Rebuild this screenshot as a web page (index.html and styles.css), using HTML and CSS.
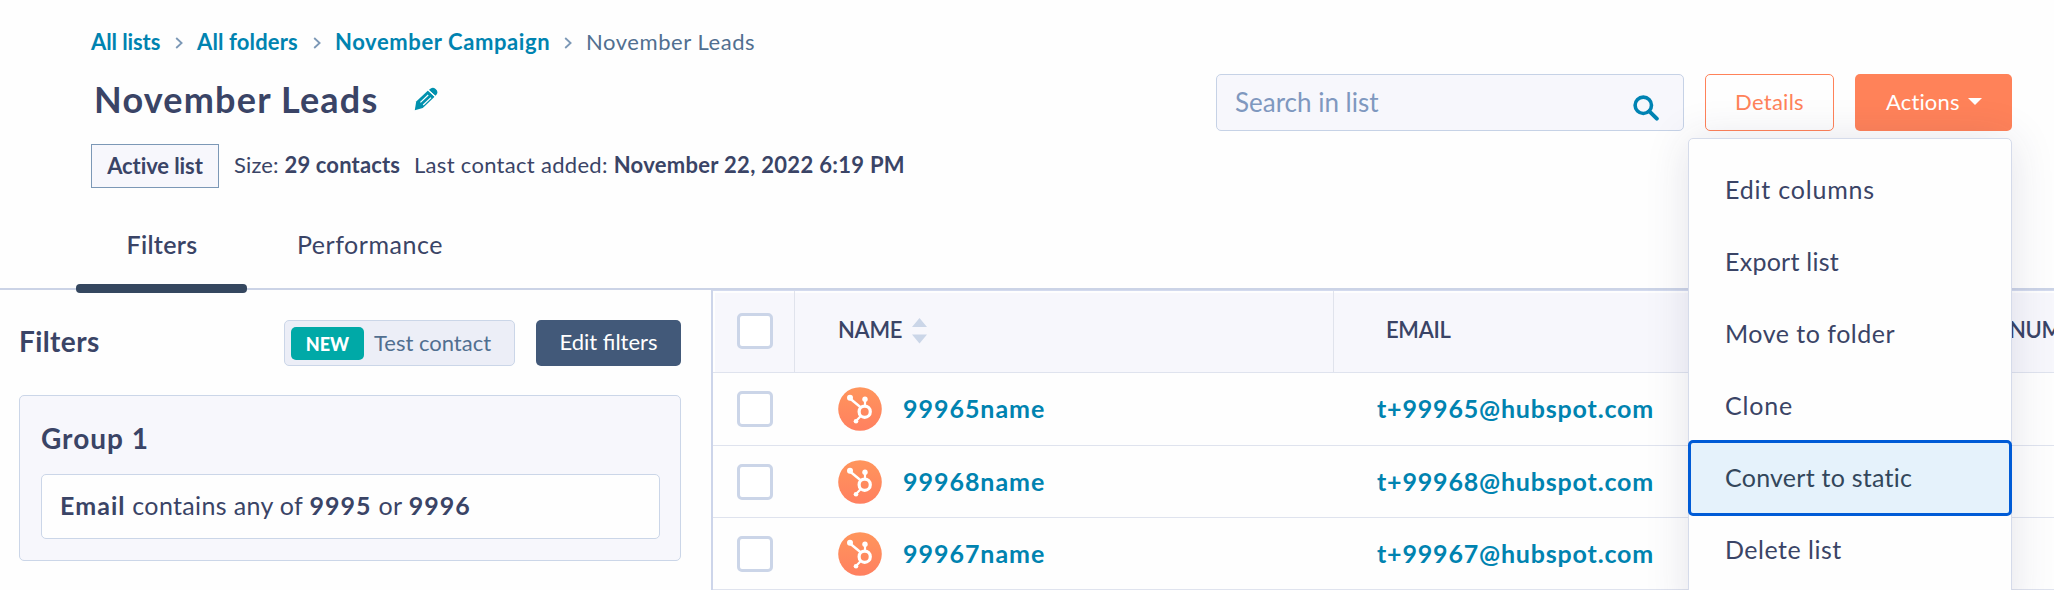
FILE: index.html
```html
<!DOCTYPE html>
<html lang="en">
<head>
<meta charset="utf-8">
<title>November Leads</title>
<link rel="stylesheet" href="styles.css">
</head>
<body>
<svg class="defs" width="0" height="0" aria-hidden="true">
  <defs>
    <linearGradient id="avatar-fill" x1="0" y1="0" x2="0" y2="1">
      <stop offset="0" stop-color="#ff955c"/><stop offset="1" stop-color="#ff8060"/>
    </linearGradient>
    <symbol id="chevron" viewBox="0 0 8 12"><path d="M1.2 1 6.6 6 1.2 11" fill="none" stroke="#7c98b6" stroke-width="1.8"/></symbol>
    <symbol id="sprocket" viewBox="0 0 44 44">
      <circle cx="22" cy="22" r="21.8" fill="url(#avatar-fill)"/>
      <g fill="none" stroke="#fff">
        <circle cx="26.7" cy="24.7" r="5.6" stroke-width="3.2"/>
        <path d="M12 11.5 22.6 20.2" stroke-width="2.4"/>
        <path d="M27 12V19.4" stroke-width="2.2"/>
        <path d="M22.8 29 18 34" stroke-width="2.2"/>
      </g>
      <g fill="#fff"><circle cx="12" cy="10.8" r="3"/><circle cx="27" cy="12.2" r="2.7"/><circle cx="18" cy="34.2" r="2.3"/></g>
    </symbol>
  </defs>
</svg>

<header class="header">
  <div class="heading">
    <nav class="crumbs">
      <a class="crumb crumb-lists">All lists</a><svg class="chevron"><use href="#chevron"/></svg>
      <a class="crumb crumb-folders">All folders</a><svg class="chevron"><use href="#chevron"/></svg>
      <a class="crumb crumb-campaign">November Campaign</a><svg class="chevron"><use href="#chevron"/></svg>
      <span class="crumb-current">November Leads</span>
    </nav>
    <div class="title-row">
      <h1 class="title">November Leads</h1>
      <svg class="pencil" viewBox="0 0 24 24">
        <path d="M.8 23.2 2.2 14.6 14 3.6 20.6 9.8 8.8 21Z" fill="#0091ae"/>
        <path d="M15.4 2.6Q18.4-.6 21.6 2 24.8 4.8 22.4 7.8L21.4 8.8 14.8 3Z" fill="#0091ae"/>
        <path d="M6.4 15.4 14.2 8M9.2 18 17 10.6M14 2.9 21 9.4" fill="none" stroke="#fefefe" stroke-width="1.2"/>
      </svg>
    </div>
    <div class="meta">
      <span class="badge">Active list</span>
      <span class="meta-size">Size: <b>29 contacts</b></span>
      <span class="meta-added">Last contact added: <b>November 22, 2022 6:19 PM</b></span>
    </div>
  </div>
  <div class="tools">
    <div class="search">
      <span class="search-text">Search in list</span>
      <svg class="search-icon" viewBox="0 0 26 26"><circle cx="10.3" cy="10.3" r="8.2" fill="none" stroke="#0083b3" stroke-width="3.6"/><path d="M16.4 16.4 23.8 23.6" stroke="#0083b3" stroke-width="4" stroke-linecap="round"/></svg>
    </div>
    <button class="btn btn-outline">Details</button>
    <div class="dropdown">
      <button class="btn btn-primary">Actions<i class="caret"></i></button>
      <ul class="menu">
        <li class="menu-item wide">Edit columns</li>
        <li class="menu-item tight">Export list</li>
        <li class="menu-item">Move to folder</li>
        <li class="menu-item wide">Clone</li>
        <li class="menu-item focused">Convert to static</li>
        <li class="menu-item">Delete list</li>
      </ul>
    </div>
  </div>
</header>

<div class="tabs">
  <div class="tab active">Filters</div>
  <div class="tab">Performance</div>
</div>

<main class="content">
  <aside class="sidebar">
    <div class="sidebar-head">
      <h2 class="sidebar-title">Filters</h2>
      <div class="test"><span class="new">NEW</span>Test contact</div>
      <button class="edit">Edit filters</button>
    </div>
    <section class="group">
      <h3 class="group-title">Group 1</h3>
      <p class="rule"><b>Email</b> contains any of <b>9995</b> or <b>9996</b></p>
    </section>
  </aside>
  <section class="table">
    <div class="row head">
      <div class="cell cell-check"><i class="check"></i></div>
      <div class="cell cell-name"><span class="th-name">NAME</span><svg class="sort" viewBox="0 0 15 26"><path d="M7.5 0 15 9H0ZM0 16.5H15L7.5 25.5Z" fill="#cbd6e8"/></svg></div>
      <div class="cell cell-email"><span class="th">EMAIL</span></div>
      <div class="cell cell-phone"><span class="th">NUM</span></div>
    </div>
    <div class="row">
      <div class="cell cell-check"><i class="check"></i></div>
      <div class="cell cell-name"><svg class="avatar"><use href="#sprocket"/></svg><a class="link">99965name</a></div>
      <div class="cell cell-email"><a class="link mail">t+99965@hubspot.com</a></div>
    </div>
    <div class="row">
      <div class="cell cell-check"><i class="check"></i></div>
      <div class="cell cell-name"><svg class="avatar"><use href="#sprocket"/></svg><a class="link">99968name</a></div>
      <div class="cell cell-email"><a class="link mail">t+99968@hubspot.com</a></div>
    </div>
    <div class="row">
      <div class="cell cell-check"><i class="check"></i></div>
      <div class="cell cell-name"><svg class="avatar"><use href="#sprocket"/></svg><a class="link">99967name</a></div>
      <div class="cell cell-email"><a class="link mail">t+99967@hubspot.com</a></div>
    </div>
  </section>
</main>
</body>
</html>
```
FILE: styles.css
```css
* { box-sizing: border-box; }
body {
  margin: 0;
  width: 2054px;
  height: 590px;
  overflow: hidden;
  background: #fefefe;
  color: #3a4466;
  font-family: Lato, "Open Sans", sans-serif;
  font-size: 25px;
}
h1, h2, h3, p, ul { margin: 0; padding: 0; }
button { font: inherit; margin: 0; }
.defs { display: block; height: 0; }

/* Header */
.header {
  display: flex;
  justify-content: space-between;
  height: 204px;
  padding: 26px 42px 0 91px;
}
.crumbs {
  display: flex;
  align-items: center;
  height: 31px;
  font-size: 22px;
  line-height: 31px;
  white-space: nowrap;
}
.crumb { color: #0083b0; font-weight: 700; }
.crumb-lists { width: 70px; letter-spacing: -.1px; }
.crumb-folders { width: 102px; letter-spacing: .14px; }
.crumb-campaign { width: 215px; letter-spacing: .6px; }
.crumb-current { color: #516f90; letter-spacing: .55px; }
.chevron { width: 8px; height: 12px; margin: 2px 14px 0 14px; }
.title-row { display: flex; align-items: center; height: 44px; margin-top: 20px; }
.title { width: 320px; padding-left: 3px; font-size: 36px; line-height: 44px; font-weight: 700; letter-spacing: 1.2px; }
.pencil { width: 24px; height: 24px; margin-left: 3px; }
.meta { display: flex; align-items: center; height: 44px; margin-top: 23px; font-size: 22px; white-space: nowrap; }
.badge {
  width: 128px;
  height: 44px;
  border: 1px solid #7c98b6;
  background: #f7f7fc;
  font-weight: 700;
  line-height: 41px;
  text-align: center;
  letter-spacing: -.1px;
}
.meta-size { width: 180px; margin-left: 15px; padding-bottom: 4px; letter-spacing: .15px; }
.meta-added { padding-bottom: 4px; letter-spacing: .3px; }

.tools { display: flex; height: 57px; margin-top: 48px; }
.search {
  display: flex;
  justify-content: space-between;
  width: 468px;
  padding: 0 24px 0 18px;
  border: 1px solid #c6d2e6;
  border-radius: 5px;
  background: #f7f7fc;
}
.search-text { color: #7f98bf; font-size: 26px; line-height: 54px; }
.search-icon { width: 26px; height: 26px; margin-top: 20px; }
.btn { height: 57px; border-radius: 5px; font-size: 22px; padding: 0 0 2px; }
.btn-outline { width: 129px; margin: 0 21px; border: 1px solid #ff8259; background: #fefefe; color: #ff8259; letter-spacing: .27px; }
.btn-primary { display: flex; align-items: center; width: 157px; padding: 0 0 2px 31px; border: 0; background: #ff8259; color: #fff; letter-spacing: .15px; }
.caret { margin-left: 8px; border: 7px solid transparent; border-top-color: #fff; border-bottom: 0; }
.dropdown { position: relative; }
.menu {
  position: absolute;
  z-index: 2;
  top: 64px;
  right: 0;
  width: 324px;
  height: 480px;
  padding-top: 15px;
  list-style: none;
  border: 1px solid #d5dbea;
  border-radius: 5px;
  background: #fefefe;
  box-shadow: 0 2px 44px rgba(45, 45, 90, .13);
}
.menu-item { height: 72px; padding-left: 36px; line-height: 71px; letter-spacing: .5px; }
.menu-item.tight { letter-spacing: .25px; }
.menu-item.wide { letter-spacing: .8px; }
.menu-item.focused {
  margin: 0 1px;
  padding-left: 35px;
  letter-spacing: .25px;
  border-radius: 3px;
  background: #e5f2fb;
  color: #33475b;
  outline: 3px solid #005bd6;
  outline-offset: -1px;
}

/* Tabs */
.tabs {
  display: flex;
  height: 86px;
  padding-left: 76px;
  border-bottom: 2px solid #cbd3e6;
}
.tab { height: 89px; padding: 0 50px; line-height: 80px; letter-spacing: .52px; }
.tab.active { width: 171px; padding: 0 0 0 1px; text-align: center; font-weight: 600; letter-spacing: .3px; position: relative; }
.tab.active::after {
  content: "";
  position: absolute;
  left: 0;
  bottom: 0;
  width: 171px;
  height: 9px;
  border-radius: 4px;
  background: #35475f;
}

/* Filter panel */
.content { display: flex; height: 300px; }
.sidebar { width: 711px; padding: 30px 30px 0 19px; }
.sidebar-head { display: flex; height: 46px; }
.sidebar-title { width: 265px; font-size: 28px; font-weight: 700; line-height: 43px; letter-spacing: .4px; }
.test {
  display: flex;
  align-items: center;
  width: 231px;
  padding: 0 0 2px 6px;
  border: 1px solid #cbd6e8;
  border-radius: 5px;
  background: #eceef7;
  color: #516f90;
  font-size: 22px;
  white-space: nowrap;
}
.new {
  width: 73px;
  height: 33px;
  margin: 2px 10px 0 0;
  border-radius: 5px;
  background: #00a9a7;
  color: #fff;
  font-size: 18px;
  font-weight: 900;
  line-height: 34px;
  text-align: center;
}
.edit { width: 145px; margin-left: 21px; padding: 0 0 3px; border: 0; border-radius: 5px; background: #425979; color: #fff; font-size: 22px; }
.group {
  height: 166px;
  margin-top: 29px;
  padding: 21px 20px 0 21px;
  border: 1px solid #cbd6e8;
  border-radius: 5px;
  background: #f7f7fc;
}
.group-title { height: 57px; font-size: 28px; font-weight: 700; line-height: 43px; letter-spacing: 1px; }
.rule {
  height: 65px;
  padding-left: 18px;
  border: 1px solid #cbd6e8;
  border-radius: 5px;
  background: #fefefe;
  line-height: 61px;
  letter-spacing: .35px;
}
.rule b { letter-spacing: 1.05px; }

/* Contacts table */
.table { flex: 1; border-left: 2px solid #cdd5ea; }
.row { display: flex; height: 72px; border-bottom: 1px solid #dfe3ee; }
.row.head { height: 83px; border-top: 1px solid #d3daee; background: #f7f7fc; box-shadow: inset 2px 2px #fefefe; font-size: 22px; font-weight: 600; }
.row.head + .row { height: 73px; }
.cell { display: flex; align-items: center; }
.cell-check { width: 82px; padding-left: 24px; }
.cell-name { width: 539px; padding-left: 43px; }
.head .cell-check, .head .cell-name { border-right: 1px solid #e0e3ec; }
.head .cell { padding-bottom: 1px; }
.check { width: 36px; height: 36px; border: 3px solid #cbd5e8; border-radius: 5px; background: #fff; }
.th-name, .th { padding-bottom: 3px; letter-spacing: -.3px; }
.th-name { width: 74px; }
.sort { width: 15px; height: 26px; margin-bottom: 1px; }
.avatar { width: 44px; height: 44px; }
.link { margin-left: 21px; padding-bottom: 2px; color: #0083b0; font-weight: 700; letter-spacing: .97px; }
.cell-email { width: 624px; padding-left: 43px; }
.head .cell-email { padding-left: 52px; }
.cell-phone { padding-left: 51px; white-space: nowrap; }
.mail { margin-left: 0; letter-spacing: .82px; }
```
